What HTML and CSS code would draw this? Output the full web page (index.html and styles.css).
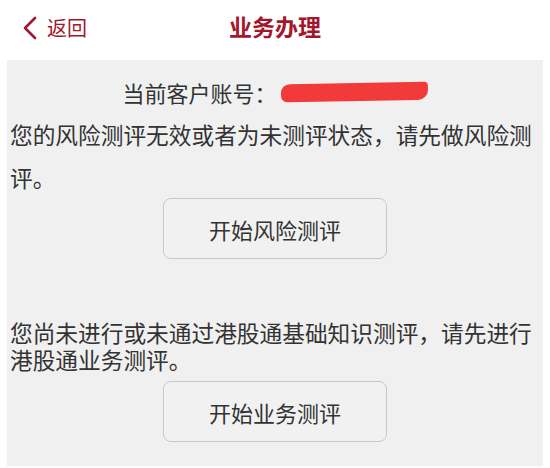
FILE: index.html
```html
<!DOCTYPE html>
<html lang="zh-CN">
<head>
  <meta charset="UTF-8" />
  <meta name="viewport" content="width=device-width, initial-scale=1.0"/>
  <title>业务办理</title>
  <link rel="stylesheet" href="styles.css">
</head>

<body>
  <!-- Top Bar -->
  <div class="top-bar">
    <a class="back-link" href="#">
      <svg class="back-icon" width="16" height="24" viewBox="0 0 16 24">
        <path d="M13 2 L3 12 L13 22" fill="none" stroke="#a3162b" stroke-width="2.6" stroke-linecap="round" stroke-linejoin="round"/>
      </svg>
      <span>返回</span>
    </a>
    <h1 class="page-title">业务办理</h1>
  </div>

  <!-- Main Panel -->
  <div class="panel">
    <div class="account-line">
      <span>当前客户账号：</span>
      <span class="account-mask"></span>
    </div>

    <p class="notice notice-risk">您的风险测评无效或者为未测评状态，请先做风险测评。</p>
    <button class="action-btn">开始风险测评</button>

    <p class="notice notice-biz">您尚未进行或未通过港股通基础知识测评，请先进行港股通业务测评。</p>
    <button class="action-btn">开始业务测评</button>
  </div>
</body>
</html>
```

FILE: styles.css
```css
body {
  font-family: "Noto Sans CJK SC", "Noto Sans", sans-serif;
  background-color: #ffffff;
  margin: 0;
  padding: 0;
  color: #333333;
}

.top-bar {
  height: 60px;
  box-sizing: border-box;
  padding-bottom: 8px;
  display: flex;
  align-items: center;
  justify-content: center;
  position: relative;
}

.back-link {
  position: absolute;
  left: 22px;
  top: 13px;
  display: flex;
  align-items: center;
  gap: 9px;
  color: #a3162b;
  font-size: 20px;
  text-decoration: none;
}

.page-title {
  margin: 0;
  font-size: 23px;
  font-weight: bold;
  color: #a3162b;
}

.panel {
  margin: 0 7px 3px 7px;
  padding: 17px 3px 24px 3px;
  background-color: #f0f0f0;
  display: flex;
  flex-direction: column;
}

.account-line {
  display: flex;
  justify-content: center;
  align-items: center;
  font-size: 22px;
  line-height: 30px;
}

.account-mask {
  display: inline-block;
  width: 147px;
  height: 18px;
  margin-left: 4px;
  background-color: #f23a3a;
  border-radius: 9px 4px 10px 6px;
  transform: rotate(-1deg);
}

.notice {
  margin: 0;
  font-size: 22.7px;
}

.notice-risk {
  line-height: 43px;
  margin-top: 6px;
}

.notice-biz {
  line-height: 27px;
  margin-top: 60px;
}

.action-btn {
  align-self: center;
  width: 224px;
  height: 61px;
  margin-top: -1px;
  font-family: inherit;
  font-size: 22px;
  color: #333333;
  background-color: #f1f1f1;
  border: 1.5px solid #c8c8c8;
  border-radius: 8px;
  cursor: pointer;
}

.notice-biz + .action-btn {
  margin-top: 8px;
}
```
